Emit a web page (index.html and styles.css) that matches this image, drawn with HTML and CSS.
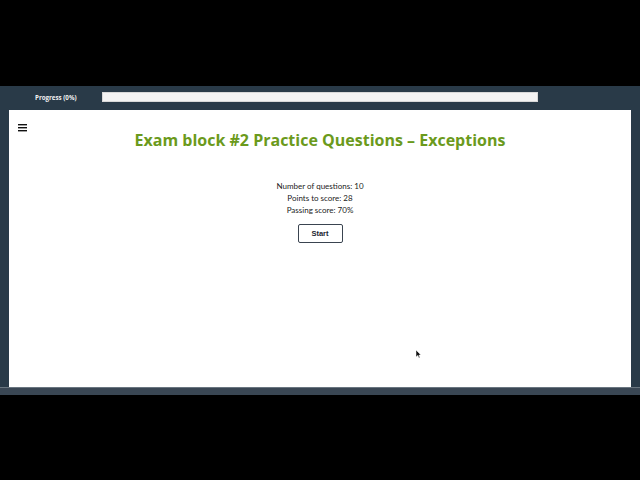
FILE: index.html
```html
<!DOCTYPE html>
<html>
<head>
<meta charset="utf-8">
<link rel="stylesheet" href="styles.css">
</head>
<body>
<div class="top-black"></div>
<div class="frame">
  <div class="progress-row">
    <span class="progress-label">Progress (0%)</span>
    <div class="progress-bar"></div>
  </div>
  <div class="panel">
    <div class="menu">
      <svg width="10" height="8" viewBox="0 0 10 8"><rect x="0" y="0" width="9" height="1.4" fill="#111"/><rect x="0" y="3" width="9" height="1.4" fill="#111"/><rect x="0" y="6" width="9" height="1.4" fill="#111"/></svg>
    </div>
    <h1 class="title">Exam block #2 Practice Questions – Exceptions</h1>
    <div class="info">
      <p>Number of questions: 10</p>
      <p>Points to score: 28</p>
      <p>Passing score: 70%</p>
    </div>
    <div class="actions"><button class="start">Start</button></div>
    <div class="cursor">
      <svg width="6" height="9" viewBox="0 0 6 9"><path d="M0 0 L0 7 L1.8 5.4 L3 8 L4 7.6 L2.9 5 L5 5 Z" fill="#111" stroke="#fff" stroke-width="0.5"/></svg>
    </div>
  </div>
  <div class="bottom-strip"></div>
</div>
</body>
</html>
```
FILE: styles.css
```css
html, body {
  margin: 0;
  padding: 0;
  background: #000;
  width: 640px;
  height: 480px;
  overflow: hidden;
  font-family: "Open Sans", "Liberation Sans", sans-serif;
}
.top-black {
  height: 86px;
}
.frame {
  background: #293a48;
  padding: 0 9px;
  display: flex;
  flex-direction: column;
}
.progress-row {
  height: 24px;
  display: flex;
  align-items: center;
}
.progress-label {
  width: 93px;
  color: #f2f2f2;
  font-size: 6.2px;
  font-weight: 700;
  padding-left: 26px;
  box-sizing: border-box;
  margin-bottom: 2px;
}
.progress-bar {
  width: 436px;
  height: 10px;
  background: #f3f3f3;
  border: 1px solid #d8d8d8;
  box-sizing: border-box;
  margin-bottom: 2px;
}
.panel {
  background: #fff;
  height: 277px;
  position: relative;
  display: flex;
  flex-direction: column;
  align-items: center;
}
.menu {
  position: absolute;
  left: 9px;
  top: 14px;
  line-height: 0;
}
.title {
  margin: 19px 0 0;
  color: #6b9a1c;
  font-size: 16px;
  font-weight: 700;
  line-height: 22px;
}
.info {
  margin-top: 29px;
  text-align: center;
  font-family: "Lato", "Open Sans", sans-serif;
  font-size: 8px;
  color: #222;
}
.info p {
  margin: 0;
  line-height: 12px;
}
.actions {
  margin-top: 3px;
}
.start {
  width: 45px;
  height: 19px;
  background: #fff;
  border: 1px solid #3a4450;
  border-radius: 2px;
  font-family: "Liberation Sans", Arial, sans-serif;
  font-size: 7.5px;
  font-weight: 700;
  color: #1a2430;
  padding: 0;
}
.cursor {
  position: absolute;
  left: 407px;
  top: 240px;
  line-height: 0;
}
.bottom-strip {
  height: 7px;
  background: #3a4754;
  margin: 0 -9px;
  border-top: 1px solid #6a7680;
}
```
